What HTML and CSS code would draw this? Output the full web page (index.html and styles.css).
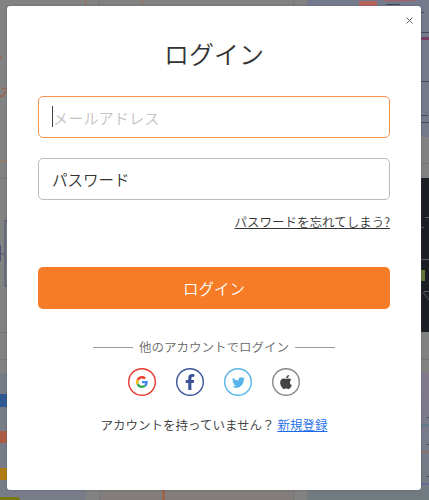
FILE: index.html
```
<!DOCTYPE html>
<html lang="ja">
<head>
    <meta charset="UTF-8">
    <meta name="viewport" content="width=device-width, initial-scale=1.0">
    <title>ログイン</title>
    <link rel="stylesheet" href="styles.css">
</head>
<body>
    <!-- dimmed template gallery behind the dialog -->
    <svg class="backdrop" width="429" height="500" viewBox="0 0 429 500" aria-hidden="true">
        <defs>
            <linearGradient id="rightCard" x1="0" y1="0" x2="0" y2="1">
                <stop offset="0" stop-color="#82798b"/>
                <stop offset="0.5" stop-color="#777b8b"/>
                <stop offset="1" stop-color="#727b80"/>
            </linearGradient>
        </defs>
        <rect width="429" height="500" fill="#828282"/>
        <rect y="373" width="86" height="127" fill="#777c87"/>
        <rect x="100" y="373" width="194" height="127" fill="#827d7b"/>
        <rect x="307" width="122" height="137" fill="#747a8c"/>
        <rect x="307" y="373" width="122" height="127" fill="url(#rightCard)"/>
        <rect x="421" y="178" width="8" height="154" fill="#1b1e23"/>
        <path d="M85.500 0v6M142.500 0v6" stroke="#9a6d55"/>
        <path d="M99.500 0v6M294 0v6M0 178.500h8M0 332.500h8M0 359.500h8M421 163.500h8M421 359.500h8M294 489v11M100 489v11" stroke="#757575"/>
        <path d="M0 161.500h8" stroke="#a27652"/>
        <path d="M0 57.500h2M0 96c3 1 5-2 5-5M2 90c0-3 3-2 5-1" stroke="#a95028" fill="none"/>
        <path d="M8 220.500H5V286h3M0 254h5M.5 245v16" stroke="#4b5775" fill="none"/>
        <rect y="394" width="8" height="13" fill="#2f5993"/>
        <rect y="431" width="8" height="12" fill="#ae5b45"/>
        <rect y="468" width="8" height="12" fill="#b17c16"/>
        <path d="M0 497h18l2 3H0z" fill="#77780d"/>
        <path d="M163.500 489v11" stroke="#a75a35" stroke-width="2"/>
        <rect x="359" y="1" width="18" height="6" fill="#b5655c"/>
        <rect x="384" width="31" height="1" fill="#a5625f"/>
        <path d="M386 4.500h14M421 12.500h3M421 32.500h8M421 81.500h8M421 115.500h7M421 122.500h8M427 417.500h2M427 444.500h2M427 476.500h2" stroke="#454a58"/>
        <rect x="421" y="37" width="8" height="3" fill="#793d68"/>
        <path d="M421 425h8" stroke="#4d7890"/>
        <path d="M421 452h8" stroke="#a3674f"/>
        <path d="M421 484h8" stroke="#6359a0"/>
        <rect x="421" y="270" width="4" height="11" fill="#60783b"/>
        <path d="M425 217.500h4M421 227.500h3M421 259.500h8M424 291.500h5M423 292l6 8" stroke="#5c6066" fill="none"/>
    </svg>

    <div class="modal">
        <button class="close" type="button" aria-label="閉じる">
            <svg width="7" height="7" viewBox="0 0 7 7"><path d="M.5.5l6 6M6.500.5l-6 6"/></svg>
        </button>
        <h1 class="title">ログイン</h1>
        <form class="form">
            <div class="field active"><span class="caret"></span>メールアドレス</div>
            <div class="field">パスワード</div>
            <a class="forgot" href="#">パスワードを忘れてしまう?</a>
            <button class="submit" type="button">ログイン</button>
        </form>
        <div class="divider">他のアカウントでログイン</div>
        <div class="social">
            <a class="icon google" href="#" aria-label="Google">
                <svg width="12" height="12" viewBox="0 0 48 48">
                    <path fill="#EA4335" d="M24 9.500c3.540 0 6.710 1.220 9.210 3.600l6.850-6.850C35.900 2.380 30.470 0 24 0 14.620 0 6.510 5.380 2.560 13.220l7.980 6.190C12.430 13.720 17.740 9.500 24 9.500z"/>
                    <path fill="#4285F4" d="M46.980 24.550c0-1.570-.15-3.090-.38-4.550H24v9.020h12.940c-.58 2.960-2.260 5.480-4.780 7.180l7.730 6c4.510-4.180 7.090-10.360 7.090-17.650z"/>
                    <path fill="#FBBC05" d="M10.530 28.590A14.500 14.500 0 0 1 9.770 24c0-1.600.27-3.140.76-4.590l-7.980-6.190A24 24 0 0 0 0 24c0 3.880.92 7.540 2.560 10.780z"/>
                    <path fill="#34A853" d="M24 48c6.480 0 11.930-2.130 15.890-5.810l-7.730-6c-2.150 1.450-4.920 2.300-8.160 2.300-6.260 0-11.570-4.220-13.470-9.910l-7.980 6.190C6.510 42.620 14.620 48 24 48z"/>
                </svg>
            </a>
            <a class="icon facebook" href="#" aria-label="Facebook">
                <svg width="10" height="16" viewBox="0 0 320 512">
                    <path d="M279.140 288l14.220-92.660h-88.910v-60.130c0-25.350 12.420-50.060 52.240-50.060h40.420V6.260S260.430 0 225.360 0c-73.220 0-121.080 44.380-121.080 124.720v70.620H22.890V288h81.390v224h100.170V288z"/>
                </svg>
            </a>
            <a class="icon twitter" href="#" aria-label="Twitter">
                <svg width="13" height="13" viewBox="0 0 24 24">
                    <path d="M23.950 4.570a10 10 0 0 1-2.820.77 4.960 4.960 0 0 0 2.160-2.720c-.95.550-2 .95-3.130 1.180a4.920 4.920 0 0 0-8.380 4.480C7.690 8.100 4.070 6.130 1.640 3.160a4.820 4.820 0 0 0-.67 2.480c0 1.710.87 3.210 2.190 4.100a4.900 4.900 0 0 1-2.230-.62v.06a4.920 4.920 0 0 0 3.950 4.830 5 5 0 0 1-2.210.08 4.940 4.940 0 0 0 4.600 3.420A9.870 9.870 0 0 1 0 19.540a14 14 0 0 0 7.550 2.210c9.050 0 14-7.500 14-13.980 0-.21 0-.42-.02-.63a9.940 9.940 0 0 0 2.420-2.570z"/>
                </svg>
            </a>
            <a class="icon apple" href="#" aria-label="Apple">
                <svg width="12" height="14" viewBox="0 30 384 450">
                    <path d="M318.700 268.700c-.2-36.700 16.400-64.400 50-84.800-18.800-26.900-47.200-41.700-84.700-44.600-35.500-2.800-74.300 20.700-88.500 20.700-15 0-49.400-19.700-76.400-19.700C63.300 141.200 4 184.800 4 273.500q0 39.300 14.400 81.200c12.800 36.700 59 126.700 107.200 125.200 25.200-.6 43-17.900 75.800-17.900 31.800 0 48.300 17.900 76.400 17.900 48.600-.7 90.400-82.500 102.600-119.300-65.200-30.700-61.700-90-61.700-91.900zm-56.600-164.200c27.300-32.400 24.800-61.900 24-72.500-24.100 1.400-52 16.400-67.900 34.900-17.500 19.800-27.800 44.300-25.600 71.900 26.100 2 49.900-11.400 69.500-34.300z"/>
                </svg>
            </a>
        </div>
        <p class="signup">アカウントを持っていません？ <a href="#">新規登録</a></p>
    </div>
</body>
</html>
```
FILE: styles.css
```
* {
    box-sizing: border-box;
}
body {
    margin: 0;
    height: 500px;
    padding: 6px 8px 10px 7px;
    overflow: hidden;
    font-family: "Noto Sans CJK JP", sans-serif;
    font-weight: 350;
    color: #333;
}
.backdrop {
    position: absolute;
    top: 0;
    left: 0;
    z-index: -1;
}
.modal {
    position: relative;
    display: flex;
    flex-direction: column;
    align-items: center;
    height: 484px;
    padding: 0 31px;
    background: #fff;
    border-radius: 3px;
    box-shadow: 0 0 2px rgba(60, 75, 100, 0.6);
}
.close {
    position: absolute;
    top: 11px;
    right: 8px;
    display: flex;
    padding: 0;
    border: 0;
    background: none;
}
.close svg {
    stroke: #666;
}
.title {
    margin: 27px 0 0;
    font-size: 25px;
    line-height: 40px;
    font-weight: 350;
}
.form {
    display: flex;
    flex-direction: column;
    width: 100%;
    margin-top: 23px;
}
.field {
    display: flex;
    align-items: center;
    height: 42px;
    margin-bottom: 20px;
    padding: 0 0 1px 13px;
    border: 1px solid #bbb;
    border-radius: 5px;
    font-size: 15.500px;
}
.field.active {
    border-color: #f8934c;
    color: #c4c4c4;
    font-size: 15.200px;
}
.caret {
    width: 1px;
    height: 21px;
    background: #444;
}
.forgot {
    align-self: flex-end;
    margin-top: -8px;
    font-size: 12.500px;
    line-height: 20px;
    color: #333;
    text-underline-offset: 1px;
}
.submit {
    height: 42px;
    margin-top: 35px;
    padding: 0;
    border: 0;
    border-radius: 5px;
    background: #f67c27;
    color: #fff;
    font: 350 15.500px "Noto Sans CJK JP", sans-serif;
}
.divider {
    display: flex;
    align-items: center;
    gap: 6px;
    margin-top: 28px;
    font-size: 12.500px;
    line-height: 20px;
    color: #666;
}
.divider::before,
.divider::after {
    content: "";
    width: 40px;
    height: 1px;
    background: #999;
}
.social {
    display: flex;
    gap: 20.300px;
    margin-top: 11px;
}
.icon {
    display: flex;
    align-items: center;
    justify-content: center;
    width: 28px;
    height: 28px;
    border-radius: 50%;
    box-shadow: inset 0 0 0 1.400px currentColor;
}
.icon svg {
    fill: currentColor;
}
.google {
    color: #e8382f;
}
.facebook {
    color: #3b5499;
}
.twitter {
    color: #55b5e8;
}
.apple {
    color: #888;
}
.apple svg {
    fill: #444;
}
.signup {
    margin: 19px 0 0;
    font-size: 12.500px;
    line-height: 20px;
}
.signup a {
    color: #1769e8;
    text-underline-offset: 1px;
}
```
